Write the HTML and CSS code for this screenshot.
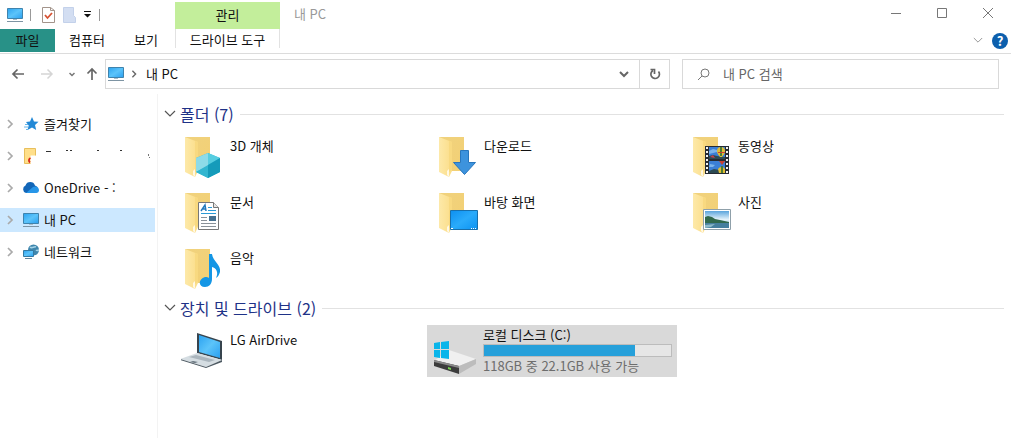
FILE: index.html
```html
<!DOCTYPE html>
<html lang="ko">
<head>
	<meta charset="utf-8">
	<title>내 PC</title>
	<link rel="stylesheet" href="styles.css">
</head>
<body>
	<!-- shared shapes -->
	<svg class="defs" width="0" height="0" aria-hidden="true">
		<defs>
			<linearGradient id="screen" x1="0" y1="0" x2="1" y2="1">
				<stop offset="0" stop-color="#2ba2f0"/>
				<stop offset=".5" stop-color="#5cc4fa"/>
				<stop offset="1" stop-color="#2a9ff0"/>
			</linearGradient>
			<linearGradient id="desk" x1="0" y1="0" x2="1" y2="1">
				<stop offset="0" stop-color="#0d8ff0"/>
				<stop offset=".5" stop-color="#2aabfb"/>
				<stop offset="1" stop-color="#0c93f2"/>
			</linearGradient>
			<linearGradient id="flap" x1="0" y1="0" x2="1" y2="0">
				<stop offset="0" stop-color="#fde9a9"/>
				<stop offset="1" stop-color="#fbdd88"/>
			</linearGradient>
			<linearGradient id="back" x1="0" y1="0" x2="1" y2="1">
				<stop offset="0" stop-color="#f0d27e"/>
				<stop offset="1" stop-color="#f3d074"/>
			</linearGradient>
			<linearGradient id="sky" x1="0" y1="0" x2="0" y2="1">
				<stop offset="0" stop-color="#5ba5dc"/>
				<stop offset=".5" stop-color="#e4f2fa"/>
				<stop offset="1" stop-color="#7fb6d6"/>
			</linearGradient>
			<symbol id="pc" viewBox="0 0 18 16">
				<path d="M1.500 1.500h15v10h-15z" fill="url(#screen)" stroke="#3f83ad"/>
				<path d="M7 12h4v1H7z" fill="#a9bcc8"/>
				<path d="M1 14h16v1H1z" fill="#7e94a3"/>
			</symbol>
			<symbol id="folder" viewBox="0 0 48 48">
				<path d="M4 4h25v34H14z" fill="url(#back)"/>
				<path d="M4 4l13 5v29l-3 6L4 39z" fill="url(#flap)"/>
				<path d="M17 9v28l-3 2V8z" fill="#f8d980"/>
				<path d="M12 38l2-2v8l-2-2z" fill="#fff8e4"/>
			</symbol>
			<symbol id="right" viewBox="0 0 8 10">
				<path d="M2 1l4 4-4 4" fill="none" stroke="currentColor" stroke-width="1.700"/>
			</symbol>
			<symbol id="down" viewBox="0 0 12 8">
				<path d="M1 1l5 5 5-5" fill="none" stroke="currentColor" stroke-width="1.200"/>
			</symbol>
		</defs>
	</svg>

	<header class="titlebar">
		<div class="quick">
			<svg width="18" height="16"><use href="#pc"/></svg>
			<span class="sep"></span>
			<button aria-label="속성"><svg width="13" height="16" viewBox="0 0 13 16"><path d="M.5.5h8l4 3v12H.500z" fill="#fff" stroke="#a3948b"/><path d="M8.500.5v3h4" fill="none" stroke="#a3948b"/><path d="M3 8l2.500 3L10 6" fill="none" stroke="#d75232" stroke-width="1.800"/></svg></button>
			<button aria-label="새 폴더"><svg width="13" height="16" viewBox="0 0 13 16"><path d="M.5.5h10v8l2 2v5H.500z" fill="#d3def2" stroke="#c3d1ea"/></svg></button>
			<button aria-label="빠른 실행 도구 모음 사용자 지정"><svg width="7" height="7" viewBox="0 0 7 7"><path d="M0 0h7v1H0zM0 3h7L3.500 6.500z" fill="#111"/></svg></button>
			<span class="sep"></span>
		</div>
		<div class="context">관리</div>
		<h1>내 PC</h1>
		<div class="window-buttons">
			<button aria-label="최소화"><svg width="12" height="12" viewBox="0 0 12 12"><path d="M1 6.500h10" stroke="#777"/></svg></button>
			<button aria-label="최대화"><svg width="12" height="12" viewBox="0 0 12 12"><path d="M1.500 1.500h9v9h-9z" fill="none" stroke="#777"/></svg></button>
			<button aria-label="닫기"><svg width="12" height="12" viewBox="0 0 12 12"><path d="M1 1l10 10M11 1L1 11" stroke="#777"/></svg></button>
		</div>
	</header>

	<nav class="ribbon">
		<button class="file">파일</button>
		<button class="computer">컴퓨터</button>
		<button class="view">보기</button>
		<button class="tools">드라이브 도구</button>
		<div class="ribbon-end">
			<button class="fold" aria-label="리본 확장"><svg width="10" height="7"><use href="#down"/></svg></button>
			<button class="help" aria-label="도움말">?</button>
		</div>
	</nav>

	<div class="toolbar">
		<div class="history">
			<button aria-label="뒤로"><svg width="14" height="12" viewBox="0 0 14 12"><path d="M13 6H2M6.500 1.500L2 6l4.500 4.500" fill="none" stroke="#666" stroke-width="1.700"/></svg></button>
			<button aria-label="앞으로"><svg width="14" height="12" viewBox="0 0 14 12"><path d="M1 6h11M7.500 1.500L12 6l-4.500 4.500" fill="none" stroke="#d5d5d5" stroke-width="1.500"/></svg></button>
			<button class="recent" aria-label="최근 위치"><svg width="6" height="5" viewBox="0 0 6 5"><path d="M.5 1L3 3.500 5.500 1" fill="none" stroke="#777" stroke-width="1.500"/></svg></button>
			<button aria-label="위로"><svg width="12" height="14" viewBox="0 0 12 14"><path d="M6 13V2M1.500 6.500L6 2l4.500 4.500" fill="none" stroke="#666" stroke-width="1.700"/></svg></button>
		</div>
		<div class="address">
			<svg width="18" height="16"><use href="#pc"/></svg>
			<svg class="crumb" width="8" height="8"><use href="#right"/></svg>
			<a href="#">내 PC</a>
			<button class="drop" aria-label="이전 위치"><svg width="10" height="7" viewBox="0 0 10 7"><path d="M1 1l4 4 4-4" fill="none" stroke="#666" stroke-width="2"/></svg></button>
			<button class="refresh" aria-label="새로 고침"><svg width="12" height="12" viewBox="0 0 12 12"><path d="M9.500 3.500A4.300 4.300 0 1 1 4 2.500M1.500 1.500H5.500V6" fill="none" stroke="#666" stroke-width="1.700"/></svg></button>
		</div>
		<div class="search">
			<svg width="13" height="13" viewBox="0 0 13 13"><circle cx="8" cy="5" r="4" fill="none" stroke="#777"/><path d="M5 8l-4 4" stroke="#777"/></svg>
			<input type="text" placeholder="내 PC 검색" aria-label="내 PC 검색">
		</div>
	</div>

	<div class="body">
		<nav class="tree">
			<a href="#"><svg class="arrow" width="8" height="10"><use href="#right"/></svg>
				<svg class="icon" width="18" height="16" viewBox="0 0 18 16"><path d="M10 1l2 4.500 4.500.3-3.500 3.200 1.200 5-4.200-2.500L5.500 14l1.200-4.500L4 6l4-.5z" fill="#2389d6"/><path d="M3 8.500h3M2 11h4M4 13.500h2" stroke="#67b6ea"/></svg>
				<span>즐겨찾기</span></a>
			<a href="#" aria-label="폴더"><svg class="arrow" width="8" height="10"><use href="#right"/></svg>
				<svg class="icon" width="18" height="16" viewBox="0 0 18 16"><path d="M2.500.5h11v7H8.500v8h-6z" fill="#ffdf8a"/><path d="M8.500 15.500h-6V.500h11v7" fill="none" stroke="#e8bf5c"/><path d="M8.500 10c-2 1-2 3-.5 4.500" fill="none" stroke="#d8261c" stroke-width="1.800"/></svg>
				<svg width="110" height="16" viewBox="0 0 110 16"><path d="M2 3.500h5M22 2.500h2M26 2.500h2M53 2.500h2M76 2.500h2" stroke="#333"/><path d="M104.500 6v2M105.500 9v1" stroke="#777"/></svg></a>
			<a href="#"><svg class="arrow" width="8" height="10"><use href="#right"/></svg>
				<svg class="icon" width="18" height="16" viewBox="0 0 18 16"><path d="M4 13a4 4 0 0 1-.5-7.500A5 5 0 0 1 13 5.500 4 4 0 0 1 14 13z" fill="#1266b8"/><path d="M4 13l7-6a4 4 0 0 1 6 3c0 2-1 3-3 3z" fill="#2796e8"/></svg>
				<span>OneDrive - :</span></a>
			<a href="#" class="selected"><svg class="arrow" width="8" height="10"><use href="#right"/></svg>
				<svg class="icon" width="18" height="16"><use href="#pc"/></svg>
				<span>내 PC</span></a>
			<a href="#"><svg class="arrow" width="8" height="10"><use href="#right"/></svg>
				<svg class="icon" width="18" height="16" viewBox="0 0 18 16"><circle cx="11.500" cy="6" r="5.500" fill="#3f86ad"/><path d="M8 3c2 2 4-1 6 0M14 6c1 1 2 0 3 0" fill="none" stroke="#a6d4e8" stroke-width="1.500"/><path d="M1.500 6.500h10v6h-10z" fill="url(#screen)" stroke="#347aa2"/><path d="M3 14.500h7" stroke="#61849a"/></svg>
				<span>네트워크</span></a>
		</nav>

		<main>
			<section>
				<h2><svg width="12" height="8"><use href="#down"/></svg>폴더 (7)</h2>
				<div class="items">
					<a href="#"><svg width="48" height="48"><use href="#folder"/><path d="M15 25l12-5 12 5v14l-12 6-12-6z" fill="#35bbd4"/><path d="M15 25l12-5v13L15 39z" fill="#8ddbe8"/><path d="M27 20l12 5-12 7z" fill="#56cde0"/><path d="M15 39l12-7v13z" fill="#32b6d0"/><path d="M27 32l12-7v14l-12 6z" fill="#159bba"/></svg><span>3D 개체</span></a>
					<a href="#"><svg width="48" height="48"><use href="#folder"/><path d="M25.500 17.500h8v12h7L29.500 41.500l-11-12h7z" fill="#3d93dd" stroke="#2876bd"/></svg><span>다운로드</span></a>
					<a href="#"><svg width="48" height="48"><use href="#folder"/><path d="M16 13h24v28H16z" fill="#262b33"/><path d="M20 14h16v12H20zM20 28h16v12H20z" fill="#3b7fd6"/><path d="M20 18l4-2 4 1v2l-8 2zM21 31l5 1-2 2h-4z" fill="#7db4ea"/><path d="M20 23l4-1 4 1 8 1v2H20zM20 38l5-2 11 2v2H20z" fill="#2c4a52"/><path d="M21 24l3-2 2 3z" fill="#c2434d"/><path d="M28 18a4 4 0 0 1 8 0c0 3-2 4-3 6h-2c-1-2-3-3-3-6zM29 36a4 4 0 0 1 7 0v4h-6z" fill="#e0bd35"/><path d="M31 14h2v9h-2zM32 33h2v7h-2z" fill="#4d7d35"/><path d="M29 19h7v1h-7zM30 28h6l-3 4z" fill="#cb4130"/><path d="M18 14v27M38 14v27" stroke="#f3f3f3" stroke-width="2" stroke-dasharray="2 2"/></svg><span>동영상</span></a>
					<a href="#"><svg width="48" height="48"><use href="#folder"/><path d="M17.500 13.500h15l5 5v22h-20z" fill="#fff" stroke="#777"/><path d="M32.500 13.500v5h5" fill="#e5e5e5" stroke="#777"/><path d="M20 22l4-6 1 6M22 20h3" fill="none" stroke="#2479bd" stroke-width="1.500"/><path d="M27 18.500h4M27 21.500h8M20 24.500h15" stroke="#2b9ad6"/><path d="M20 28.500h6M20 31.500h6M20 34.500h15M20 37.500h15" stroke="#8a9299"/><path d="M28 27h7v5h-7z" fill="#46708f"/></svg><span>문서</span></a>
					<a href="#"><svg width="48" height="48"><use href="#folder"/><path d="M15.500 21.500h27v19h-27z" fill="url(#desk)" stroke="#176fac"/><path d="M16 39.500h2M36 39.500h1M38 39.500h1M40 39.500h1" stroke="#fff"/></svg><span>바탕 화면</span></a>
					<a href="#"><svg width="48" height="48"><use href="#folder"/><path d="M14.500 20.500h27v20h-27z" fill="#fff" stroke="#8fa0aa"/><path d="M16 22h24v17H16z" fill="url(#sky)"/><path d="M16 28l3-1 4 1 3 2 5 1 9 2v1H16z" fill="#31694d"/><path d="M16 34h24v5H16z" fill="#467f9e"/><path d="M16 36l10-1-4 3-6 1z" fill="#8db9c9"/></svg><span>사진</span></a>
					<a href="#"><svg width="48" height="48"><use href="#folder"/><path d="M28 9h3c1 8 9 10 8 18-1 3-2 5-4 6 3-6 0-10-4-11v12c0 5-3 8-7 8-7 0-7-8 0-10 2 0 3 0 4 1z" fill="#1496e5"/></svg><span>음악</span></a>
				</div>
			</section>

			<section>
				<h2><svg width="12" height="8"><use href="#down"/></svg>장치 및 드라이브 (2)</h2>
				<div class="items">
					<a href="#"><svg width="48" height="48"><path d="M16 6l25 8v19l-25-7z" fill="#37444e"/><path d="M18 8l21 7v16l-21-6z" fill="url(#screen)"/><path d="M16 26l25 7-16 7L-1 32z" fill="#d5dde2"/><path d="M15 28l19 5-6 2-20-5z" fill="#aab5bd"/><path d="M12 34l5 1-3 1-5-1z" fill="#67747e"/><path d="M-1 32l26 8 16-7v2l-16 6-26-8z" fill="#4e5a63"/></svg><span>LG AirDrive</span></a>
					<a href="#" class="drive selected"><svg width="48" height="48"><path d="M3 34l15-11 27 9-17 7z" fill="#f0f0f0"/><path d="M3 33l25 6v8L3 39z" fill="#3c3c3c"/><path d="M3 33l25 6v2L3 35z" fill="#8a8a8a"/><path d="M28 39l17-7v5L28 47z" fill="#bcbcbc"/><path d="M17 40l3 1v2l-3-1z" fill="#77d651"/><path d="M3 16l6-1v7H3zM10 15l8-1v8h-8zM3 23h6v8l-6-1zM10 23h8v9l-8-1z" fill="#09b5ea"/></svg>
						<span class="info">
							<span>로컬 디스크 (C:)</span>
							<span class="bar"><span class="used" style="width: 81%"></span></span>
							<span class="free">118GB 중 22.1GB 사용 가능</span>
						</span></a>
				</div>
			</section>
		</main>
	</div>
</body>
</html>
```
FILE: styles.css
```css
* {
	box-sizing: border-box;
}

body {
	display: flex;
	flex-direction: column;
	min-height: 100vh;
	margin: 0;
	background: #fff;
	color: #111;
	font: 13px/18px "Noto Sans CJK KR", sans-serif;
}

a {
	color: inherit;
	text-decoration: none;
}

button {
	padding: 0;
	border: none;
	background: none;
	color: inherit;
	font: inherit;
}

svg {
	display: block;
	flex: none;
}

.defs {
	position: absolute;
}

.titlebar {
	display: flex;
	height: 29px;
}

.quick {
	display: flex;
	align-items: center;
	width: 175px;
	padding-left: 6px;
}

.quick .sep {
	width: 1px;
	height: 12px;
	margin: 0 11px 0 6px;
	background: #999;
}

.quick button {
	margin-right: 8px;
}

.quick button:nth-of-type(3) {
	margin-right: 2px;
}

.context {
	width: 105px;
	margin-top: 2px;
	background: #c3ee9b;
	line-height: 25px;
	text-align: center;
}

h1 {
	margin: 0 0 0 14px;
	color: #999;
	font-size: 13px;
	font-weight: normal;
	line-height: 28px;
}

.window-buttons {
	display: flex;
	margin-left: auto;
}

.window-buttons button {
	display: grid;
	place-items: center;
	width: 46px;
	height: 26px;
}

.ribbon {
	display: flex;
	height: 25px;
	border-bottom: 1px solid #dcdcdc;
}

.ribbon button {
	height: 23px;
	padding-bottom: 2px;
}

.ribbon .file {
	width: 55px;
	background: #289187;
}

.ribbon .computer {
	width: 64px;
}

.ribbon .view {
	width: 54px;
}

.ribbon .tools {
	width: 105px;
	height: 19px;
	margin-left: 2px;
	padding: 0;
	border: solid #e2e2e2;
	border-width: 0 1px;
	line-height: 21px;
}

.ribbon-end {
	display: flex;
	align-items: center;
	gap: 9px;
	margin-left: auto;
	padding-right: 3px;
}

.fold {
	display: grid;
	place-items: center;
	color: #999;
}

.ribbon .help {
	width: 16px;
	height: 16px;
	padding: 0;
	border-radius: 50%;
	background: #0c5fad;
	color: #fff;
	font-weight: bold;
	line-height: 16px;
}

.toolbar {
	display: grid;
	grid-template-columns: 105px 565fr 329fr;
	height: 40px;
	padding: 5px 12px 5px 0;
}

.history {
	display: flex;
	align-items: center;
	gap: 15px;
	padding-left: 11px;
}

.history .recent {
	margin-right: -4px;
}

.address {
	display: flex;
	align-items: center;
	border: 1px solid #d9d9d9;
	padding-left: 1px;
}

.address .crumb {
	margin: 0 8px 0 5px;
	color: #666;
}

.address .drop {
	display: grid;
	place-items: center;
	width: 30px;
	height: 100%;
	margin-left: auto;
}

.address .refresh {
	display: grid;
	place-items: center;
	width: 30px;
	height: 100%;
	border-left: 1px solid #d9d9d9;
}

.search {
	display: flex;
	align-items: center;
	gap: 13px;
	margin-left: 12px;
	border: 1px solid #d9d9d9;
	padding-left: 14px;
}

.search input {
	flex: 1;
	min-width: 0;
	padding: 0;
	border: none;
	outline: none;
	font: inherit;
}

.search input::placeholder {
	color: #666;
}

.body {
	display: flex;
	flex: 1;
}

.tree {
	display: flex;
	flex: none;
	flex-direction: column;
	gap: 8px;
	width: 158px;
	padding: 18px 2px 0 0;
	border-right: 1px solid #f3f3f3;
}

.tree a {
	display: flex;
	align-items: center;
	height: 24px;
	padding-left: 6px;
}

.tree .arrow {
	margin-right: 8px;
	color: #aaa;
}

.tree .icon {
	margin-right: 4px;
}

.tree .selected {
	background: #cce8ff;
}

main {
	flex: 1;
	padding: 10px 7px 0 6px;
}

h2 {
	display: flex;
	align-items: center;
	margin: 0;
	color: #1e3287;
	font-size: 16px;
	font-weight: normal;
	line-height: 20px;
}

h2 svg {
	margin-right: 4px;
	color: #555;
}

h2::after {
	content: "";
	flex: 1;
	height: 1px;
	margin-left: 6px;
	background: #e2e2e2;
}

.items {
	display: grid;
	grid-template-columns: repeat(auto-fill, 250px);
	gap: 4px;
	padding: 7px 0 3px 9px;
}

.items a {
	display: flex;
	gap: 1px;
	height: 52px;
	padding: 2px 5px 2px 8px;
}

.items a > span {
	padding-top: 4px;
}

.items .selected {
	background: #d9d9d9;
}

.items .drive {
	padding-left: 4px;
	gap: 4px;
}

.items .drive .info {
	display: flex;
	flex: 1;
	flex-direction: column;
	padding: 0;
	line-height: 16px;
}

.bar {
	height: 13px;
	margin: 1px 0;
	border: 1px solid #bcbcbc;
	background: #e6e6e6;
}

.used {
	display: block;
	height: 100%;
	background: #26a0da;
}

.free {
	color: #6d6d6d;
}
```
